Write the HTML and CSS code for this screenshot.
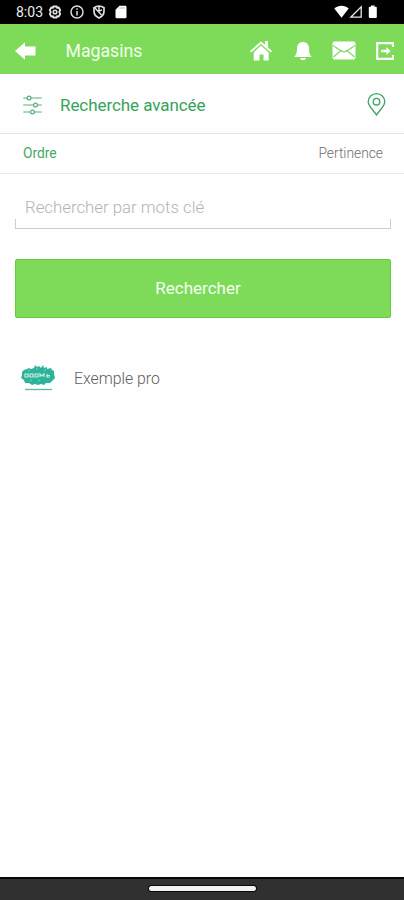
FILE: index.html
```html
<!DOCTYPE html>
<html lang="fr">
<head>
<meta charset="utf-8">
<title>Magasins</title>
<link rel="stylesheet" href="styles.css">
</head>
<body>
<div class="status">
  <span class="time">8:03</span>
  <svg class="gear" width="14" height="14" viewBox="0 0 14 14" fill="none" stroke="#e4e4e4"><path d="M5.400 1.500h3.200l.5 1.300 1.600-.3 1.500 2.600L11.200 7l1 1.900-1.500 2.600-1.600-.3-.5 1.300H5.400l-.5-1.300-1.600.3-1.500-2.600L2.800 7l-1-1.900 1.500-2.600 1.600.3z" stroke-width="1.800"/><circle cx="7" cy="7" r="1.800" stroke-width="1.500"/></svg>
  <svg class="info" width="14" height="14" viewBox="0 0 14 14" fill="none" stroke="#ddd"><circle cx="7" cy="7" r="6" stroke-width="1.500"/><path d="M7 3.300v1.500M7 6v4.500" stroke-width="1.500"/></svg>
  <svg class="shield" width="14" height="14" viewBox="0 0 14 14" fill="none" stroke="#e0e0e0"><path d="M7 1.200c2 0 3.500.5 5 1.500v3.600c0 3-2 5.300-5 6.700-3-1.400-5-3.700-5-6.700V2.700c1.500-1 3-1.500 5-1.500z" stroke-width="1.700"/><path d="M3 3l6.500 7M7 2v4l3-1" stroke-width="1.500"/></svg>
  <svg class="sd" width="12" height="14" viewBox="0 0 12 14"><path d="M4.500 0.700h5.800a1.200 1.200 0 0 1 1.200 1.200v10.200a1.200 1.200 0 0 1-1.200 1.200H1.700a1.200 1.200 0 0 1-1.200-1.200V4.700z" fill="#fff"/><path d="M5 2v2M7 2v2M9 2v2" stroke="#999" stroke-width=".7"/></svg>
  <svg class="signals" width="44" height="14" viewBox="0 0 44 14"><path d="M.3 3.500C4.500-.1 10.500-.1 14.700 3.500L7.500 12.700z" fill="#fff"/><path d="M27.200 1.800v10.400H16.800z" fill="none" stroke="#e8e8e8" stroke-width="1.300"/><path d="M37 .5h3.500v1.300h1.300q1 0 1 1v9.200q0 1-1 1h-6q-1 0-1-1V2.800q0-1 1-1H37z" fill="#fff"/></svg>
</div>
<header class="header">
  <svg class="back" width="21" height="18" viewBox="0 0 21 18"><path d="M0 9L10 .3v4.200h10.500v9H10v4.200z" fill="#fff"/></svg>
  <h1 class="title">Magasins</h1>
  <nav class="actions">
    <svg width="22" height="20" viewBox="0 0 22 20"><path d="M.6 10.800L11 1.500l10.400 9.300" fill="none" stroke="#fff" stroke-width="2"/><path d="M15 0h3v7l-3-3zM11 4.600l7.700 6.800v8h-5.200v-5.800h-4v5.800H3.700v-8z" fill="#fff"/></svg>
    <svg class="bell" width="18" height="20" viewBox="0 0 18 20"><path d="M9 1c4.200 0 6 3 6 6.500 0 4 .7 6 2.700 8.500H.3C2.300 13.500 3 11.500 3 7.500 3 4 4.800 1 9 1zM6 17h6q-.5 2.200-3 2.200T6 17z" fill="#fff"/></svg>
    <svg class="mail" width="24" height="19" viewBox="0 0 24 19"><rect x=".5" y=".5" width="23" height="18" rx="2" fill="#fff"/><path d="M1 4.500c6 4 9 6.500 11 6.500s5-2.500 11-6.500M1.500 16l7-6M22.500 16l-7-6" fill="none" stroke="#7edb59" stroke-width="1.200"/></svg>
    <svg class="exit" width="18" height="18" viewBox="0 0 18 18"><path d="M17 5V1.200H1.200v15.600H17V13" fill="none" stroke="#fff" stroke-width="2.200"/><path d="M5 7.800h5.500V4.900l4 4.100-4 4.100v-2.900H5z" fill="#fff"/></svg>
  </nav>
</header>
<main>
  <section class="advanced">
    <svg width="19" height="20" viewBox="0 0 19 20" fill="none" stroke="#55af76" stroke-width="1.200"><path d="M.3 3h4M8 3h10.700M.3 10h10.400M14.400 10h4.300M.3 17h7.400M11.400 17h7.300"/><circle cx="6.100" cy="3" r="1.900"/><circle cx="12.500" cy="10" r="1.900"/><circle cx="9.500" cy="17" r="1.900"/></svg>
    <span class="label">Recherche avancée</span>
    <svg class="pin" width="19" height="23" viewBox="0 0 19 23" fill="none" stroke="#3aa55f" stroke-width="1.300"><path d="M9.500 22C7 17.500 1.200 13.500 1.200 8.700a8.300 8 0 0 1 16.600 0c0 4.800-5.800 8.800-8.300 13.300z"/><circle cx="9.500" cy="8.700" r="3.300"/></svg>
  </section>
  <section class="order"><span class="order-key">Ordre</span><span class="order-value">Pertinence</span></section>
  <div class="field"><span class="placeholder">Rechercher par mots clé</span><div class="underline"></div></div>
  <button class="submit"><span>Rechercher</span></button>
  <div class="item">
    <svg width="34" height="28" viewBox="0 0 34 28"><path d="M1 8l2-2 3-1 2-1 2 1 3-1 1-3 2 2 2-1 2 2 2-3 1 3 3-1v2l4-1 1 2 2 1v3l1 4-3 3-2 2-4 0-2 2-3-1-3 1-3-1-3 1-3-2-4 0-1-3-3-2 1-3z" fill="#2eb398"/><path d="M4 13v-3h3v3zm5 0v-3h3v3zm5-3v3h3v-3zm5 3v-3l2 2 2-2v3m3-3v3h3m-3-1.500h3" fill="none" stroke="#c5eee3" stroke-width="1.200"/><path d="M7 7l2-1m6 0l2-2m6 3l2-2M9 17l2-1m6 1l2-1" stroke="#8dd8c8" stroke-width=".8"/><path d="M4 25.500h27" stroke="#55bea6" stroke-width="1.300"/></svg>
    <span class="name">Exemple pro</span>
  </div>
</main>
<footer class="navbar"><div class="handle"></div></footer>
</body>
</html>
```
FILE: styles.css
```css
* { box-sizing: border-box; }
body { margin: 0; width: 404px; height: 900px; display: flex; flex-direction: column; background: #fefefe; font-family: Roboto, sans-serif; overflow: hidden; }
svg { display: block; flex: none; }
span, h1 { white-space: nowrap; }
.status { height: 24px; background: #000; display: flex; align-items: center; padding: 0 26px 0 16px; flex: none; }
.time { width: 31.500px; color: #eee; font-size: 14px; line-height: 16px; }
.info, .shield { margin-left: 8px; }
.sd { margin-left: 9px; }
.signals { margin-left: auto; }
.header { height: 50px; background: #7edb59; display: flex; align-items: center; padding: 3px 10px 0 15px; flex: none; }
.title { margin: 0 0 0 29.500px; font-size: 17.700px; font-weight: 400; line-height: 24px; color: #f3fff0; }
.actions { margin-left: auto; display: flex; align-items: center; }
.bell { margin-left: 22px; }
.mail { margin-left: 20px; }
.exit { margin-left: 20px; }
main { flex: 1; }
.advanced { height: 60px; border-bottom: 1px solid #e5e5e5; display: flex; align-items: center; padding: 2px 18px 0 23px; }
.label { margin-left: 18px; font-size: 17px; color: #36a35a; letter-spacing: -.07px; }
.pin { margin-left: auto; }
.order { height: 40px; border-bottom: 1px solid #e8e8e8; display: flex; justify-content: space-between; align-items: center; padding: 0 21px 2px 23px; font-size: 13.800px; }
.order-key { color: #45aa66; }
.order-value { color: #707070; font-weight: 300; }
.field { margin: 20px 13px 0 15px; height: 35px; position: relative; padding-left: 10px; }
.placeholder { display: block; font-size: 16.800px; line-height: 26px; font-weight: 300; color: #b4b4b4; }
.underline { position: absolute; left: 0; right: 0; bottom: 0; height: 10px; border: solid #cecece; border-width: 0 1px 1px; }
.submit { display: flex; align-items: center; justify-content: center; width: 376px; height: 59px; margin: 30px 0 0 15px; padding: 0 10px 2px 0; background: #7edb59; border: 1px solid #65cd3c; border-radius: 2px; color: #f3fff0; font: 17px Roboto, sans-serif; }
.item { margin: 46px 0 0 21px; height: 28px; display: flex; align-items: center; }
.name { margin-left: 19px; font-size: 15.800px; font-weight: 300; color: #606060; }
.navbar { flex: none; height: 23px; background: #303030; border-top: 2px solid #080808; display: flex; justify-content: center; padding-top: 7px; }
.handle { width: 107px; height: 5px; border-radius: 3px; background: #f2f2f2; box-shadow: 0 0 0 1px #090909; }
```
